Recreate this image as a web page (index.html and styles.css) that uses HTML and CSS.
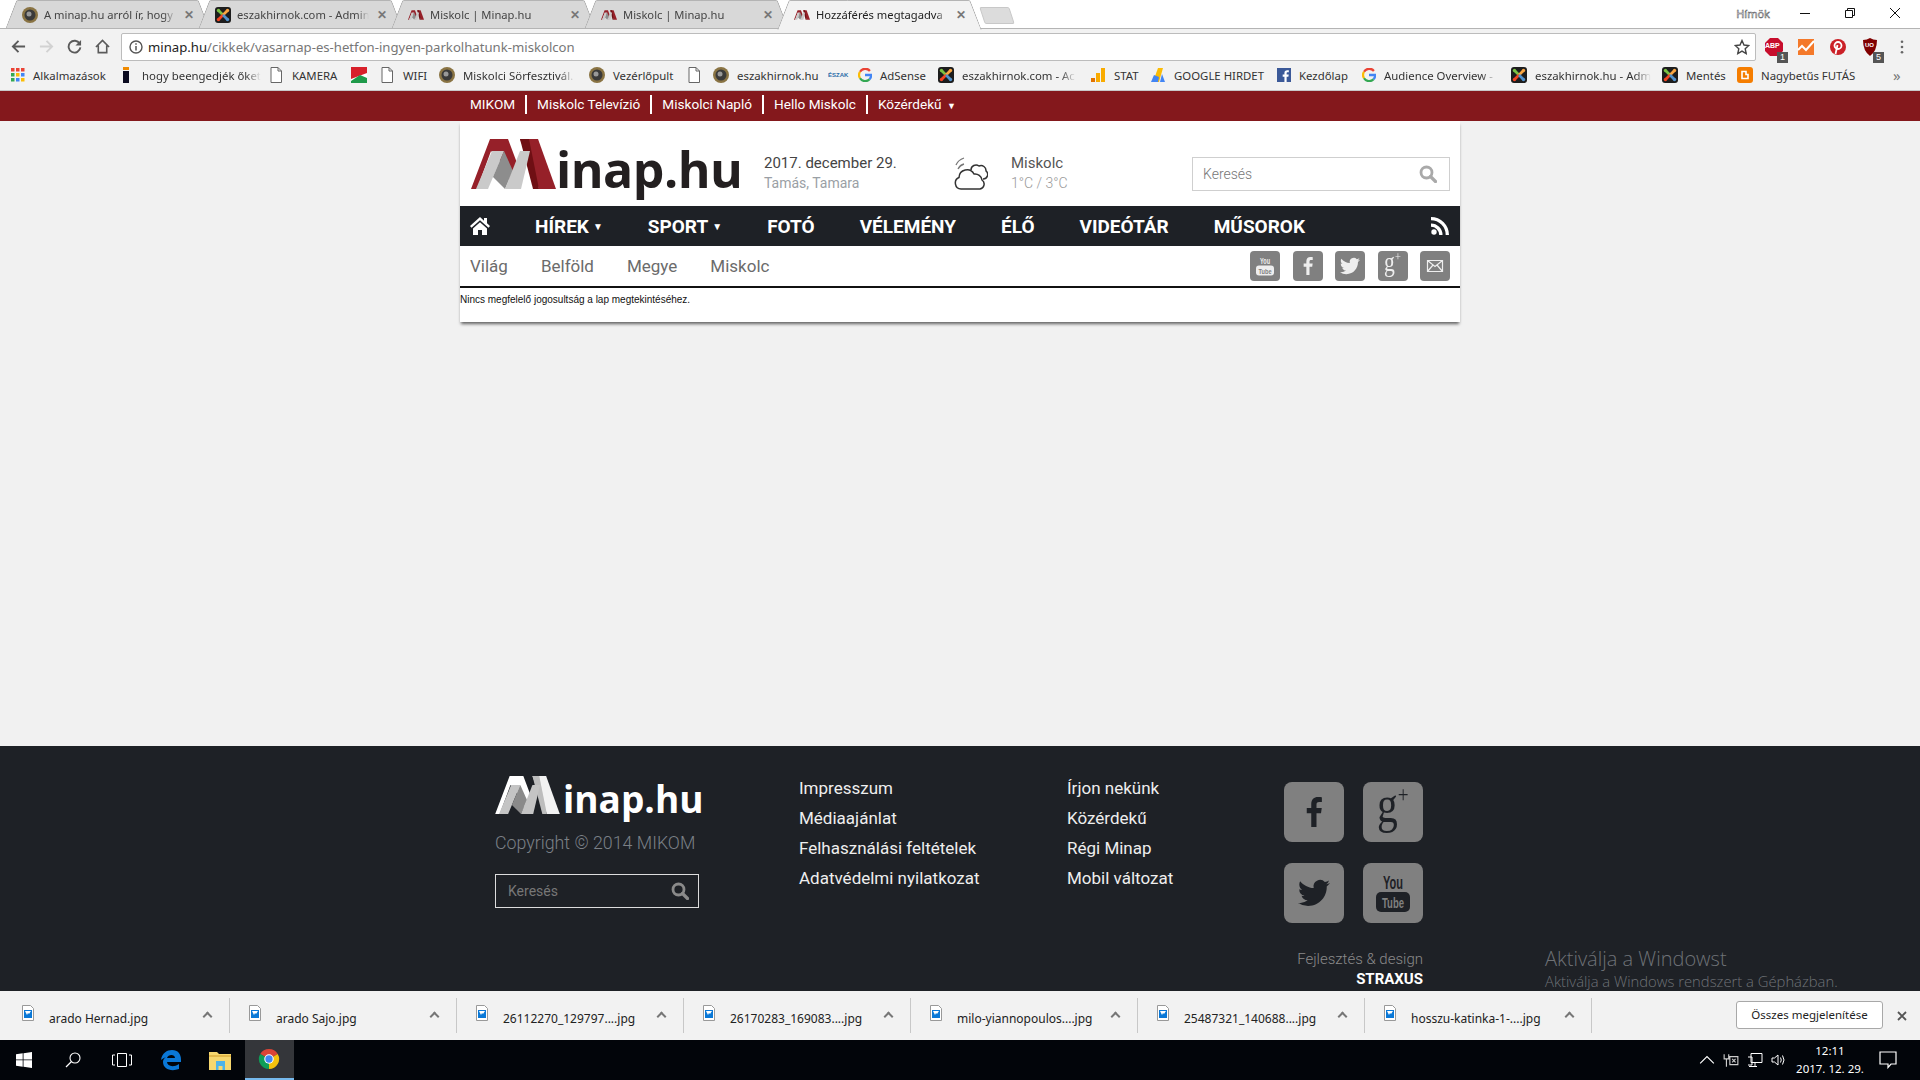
FILE: index.html
```html
<!DOCTYPE html>
<html lang="hu">
<head>
    <meta charset="UTF-8">
    <meta name="viewport" content="width=device-width, initial-scale=1.0">
    <title>Hozzáférés megtagadva</title>
    <link rel="stylesheet" href="styles.css">
</head>
<body>
    <svg class="defs" width="0" height="0" aria-hidden="true">
        <symbol id="i-mk" viewBox="0 0 16 16">
            <circle cx="8" cy="8" r="8" fill="#8a7444"/><circle cx="8" cy="8" r="5.500" fill="#3a3a3a"/><circle cx="7" cy="7" r="2.500" fill="#999"/>
        </symbol>
        <symbol id="i-joomla" viewBox="0 0 16 16">
            <rect width="16" height="16" rx="3" fill="#1d1d1d"/>
            <path d="M8 8L4 4" stroke="#7ac143" stroke-width="2.600"/><path d="M8 8l4-4" stroke="#f9a541" stroke-width="2.600"/>
            <path d="M8 8l-4 4" stroke="#f44321" stroke-width="2.600"/><path d="M8 8l4 4" stroke="#5091cd" stroke-width="2.600"/>
            <circle cx="3.500" cy="3.500" r="1.700" fill="#7ac143"/><circle cx="12.500" cy="3.500" r="1.700" fill="#f9a541"/><circle cx="3.500" cy="12.500" r="1.700" fill="#f44321"/><circle cx="12.500" cy="12.500" r="1.700" fill="#5091cd"/>
        </symbol>
        <symbol id="i-minap" viewBox="0 0 85 50">
            <polygon points="0,50 19,0 37,0 49,32 42,50 34,28 20,12 6,50" fill="#962029"/>
            <polygon points="49,0 67,0 85,50 68,50" fill="#962029"/>
            <polygon points="49,0 58,0 68,50 62,50" fill="#6f0f14"/>
            <polygon points="5,50 21,12 33,12 17,50" fill="#cacaca"/>
            <polygon points="33,12 42,32 34,50 22,38" fill="#8d8d8d"/>
            <polygon points="34,50 49,12 59,12 50,50" fill="#cacaca"/>
        </symbol>
        <symbol id="i-doc" viewBox="0 0 12 16">
            <path d="M1 .5h7l3.500 3.500v11.500h-10.500z" fill="#fff" stroke="#666"/><path d="M8 .5v3.500h3.500" fill="none" stroke="#666"/>
        </symbol>
        <symbol id="i-g" viewBox="0 0 16 16">
            <path d="M13.600 3.300A7 7 0 0 0 2.300 4.300" fill="none" stroke="#ea4335" stroke-width="2.600"/>
            <path d="M2.300 4.300a7 7 0 0 0 0 7.400" fill="none" stroke="#fbbc05" stroke-width="2.600"/>
            <path d="M2.300 11.700a7 7 0 0 0 10.900 1.200" fill="none" stroke="#34a853" stroke-width="2.600"/>
            <path d="M13.200 12.900A7 7 0 0 0 15 8H8" fill="none" stroke="#4285f4" stroke-width="2.600"/>
        </symbol>
        <symbol id="i-file" viewBox="0 0 12 16">
            <path d="M.5 .5h8l3 3v12h-11z" fill="#fff" stroke="#999"/><rect x="2" y="5" width="8" height="8" fill="#0a78d7"/><path d="M3 6h6l-2 3-1-1-1 2z" fill="#fff"/>
        </symbol>
        <symbol id="i-search" viewBox="0 0 18 18">
            <circle cx="7.500" cy="7.500" r="5.500" fill="none" stroke="currentColor" stroke-width="2.800"/><path d="M11.500 11.500l5 5" stroke="currentColor" stroke-width="3.200" stroke-linecap="round"/>
        </symbol>
        <symbol id="i-f" viewBox="0 0 24 24">
            <path d="M14 24V13h3.600l.6-4.300H14V6c0-1.200.4-2.100 2.100-2.100h2.200V.2C17.900.1 16.600 0 15.200 0 12 0 9.800 2 9.800 5.600v3.100H6.200V13h3.600v11z"/>
        </symbol>
        <symbol id="i-tw" viewBox="0 0 24 24">
            <path d="M23.953 4.570a10 10 0 01-2.825.775 4.958 4.958 0 002.163-2.723c-.951.555-2.005.959-3.127 1.184a4.920 4.920 0 00-8.384 4.482C7.690 8.095 4.067 6.130 1.640 3.162a4.822 4.822 0 00-.666 2.475c0 1.710.870 3.213 2.188 4.096a4.904 4.904 0 01-2.228-.616v.060a4.923 4.923 0 003.946 4.827 4.996 4.996 0 01-2.212.085 4.936 4.936 0 004.604 3.417 9.867 9.867 0 01-6.102 2.105c-.390 0-.779-.023-1.170-.067a13.995 13.995 0 007.557 2.209c9.053 0 13.998-7.496 13.998-13.985 0-.210 0-.420-.015-.630A9.935 9.935 0 0024 4.590z"/>
        </symbol>
    </svg>

    <div class="tabstrip">
        <div class="tab">
            <svg class="fav"><use href="#i-mk"/></svg>
            <span class="tab-title">A minap.hu arról ír, hogy</span>
            <span class="tab-x">✕</span>
        </div>
        <div class="tab">
            <svg class="fav"><use href="#i-joomla"/></svg>
            <span class="tab-title">eszakhirnok.com - Admin</span>
            <span class="tab-x">✕</span>
        </div>
        <div class="tab">
            <svg class="fav"><use href="#i-minap"/></svg>
            <span class="tab-title">Miskolc | Minap.hu</span>
            <span class="tab-x">✕</span>
        </div>
        <div class="tab">
            <svg class="fav"><use href="#i-minap"/></svg>
            <span class="tab-title">Miskolc | Minap.hu</span>
            <span class="tab-x">✕</span>
        </div>
        <div class="tab active">
            <svg class="fav"><use href="#i-minap"/></svg>
            <span class="tab-title">Hozzáférés megtagadva</span>
            <span class="tab-x">✕</span>
        </div>
        <div class="new-tab"></div>
        <div class="win-controls">
            <span class="win-user">Hímök</span>
            <svg class="win-btn" viewBox="0 0 12 12"><path d="M1 6.500h10" stroke="#111"/></svg>
            <svg class="win-btn" viewBox="0 0 12 12"><path d="M1.500 3.500h7v7h-7zM3.500 3.500v-2h7v7h-2" fill="none" stroke="#111"/></svg>
            <svg class="win-btn" viewBox="0 0 12 12"><path d="M1 1l10 10M11 1L1 11" stroke="#111"/></svg>
        </div>
    </div>

    <div class="toolbar">
        <svg class="tool" viewBox="0 0 16 16"><path d="M15 8H2M8 2L2 8l6 6" fill="none" stroke="#5a5a5a" stroke-width="2"/></svg>
        <svg class="tool" viewBox="0 0 16 16"><path d="M1 8h13M8 2l6 6-6 6" fill="none" stroke="#d2d2d2" stroke-width="2"/></svg>
        <svg class="tool" viewBox="0 0 16 16"><path d="M13.500 5A6.300 6.300 0 1 0 14.300 9" fill="none" stroke="#5a5a5a" stroke-width="2"/><path d="M15 1v6H9z" fill="#5a5a5a"/></svg>
        <svg class="tool" viewBox="0 0 16 16"><path d="M1 8.500L8 1.500l7 7M3.500 7v7.500h9V7" fill="none" stroke="#5a5a5a" stroke-width="1.700"/></svg>
        <div class="address">
            <svg class="addr-info" viewBox="0 0 14 14"><circle cx="7" cy="7" r="6" fill="none" stroke="#555" stroke-width="1.400"/><path d="M7 6v4.500M7 3.200v1.600" stroke="#555" stroke-width="1.500"/></svg>
            <span class="addr-url"><b>minap.hu</b>/cikkek/vasarnap-es-hetfon-ingyen-parkolhatunk-miskolcon</span>
            <svg class="addr-star" viewBox="0 0 16 16"><path d="M8 1.500l2 4.500 4.800.5-3.600 3.200 1 4.800L8 12.100 3.800 14.500l1-4.800L1.200 6.500 6 6z" fill="none" stroke="#444" stroke-width="1.400"/></svg>
        </div>
        <div class="extensions">
            <div class="ext">
                <svg viewBox="0 0 20 20"><polygon points="6,1 14,1 19,6 19,14 14,19 6,19 1,14 1,6" fill="#c70d2c"/></svg>
                <span class="ext-abp">ABP</span>
                <span class="ext-badge">1</span>
            </div>
            <div class="ext">
                <svg viewBox="0 0 20 20"><rect x="2" y="2" width="16" height="16" fill="#f4792a"/><path d="M2 13l4-4 4 4 8-9" fill="none" stroke="#fff" stroke-width="2"/></svg>
            </div>
            <div class="ext">
                <svg viewBox="0 0 20 20"><circle cx="10" cy="10" r="8" fill="#cb2027"/><circle cx="10" cy="8.500" r="3.500" fill="none" stroke="#fff" stroke-width="1.800"/><path d="M9.500 8l-2 9" stroke="#fff" stroke-width="1.800"/></svg>
            </div>
            <div class="ext">
                <svg viewBox="0 0 20 20"><path d="M3 3q4 0 7-2 3 2 7 2 0 11-7 16-7-5-7-16z" fill="#800000"/></svg>
                <span class="ext-uo">UO</span>
                <span class="ext-badge">5</span>
            </div>
            <svg class="menu-dots" viewBox="0 0 4 16"><circle cx="2" cy="2" r="1.500" fill="#666"/><circle cx="2" cy="8" r="1.500" fill="#666"/><circle cx="2" cy="14" r="1.500" fill="#666"/></svg>
        </div>
    </div>

    <div class="bookmarks">
        <div class="bm">
            <svg class="fav small" viewBox="0 0 14 14"><path d="M0 0h3.500v3.500H0z" fill="#ea4335"/><path d="M5 0h3.500v3.500H5z" fill="#ea4335"/><path d="M10 0h3.500v3.500H10z" fill="#ea4335"/><path d="M0 5h3.500v3.500H0z" fill="#34a853"/><path d="M5 5h3.500v3.500H5z" fill="#fbbc05"/><path d="M10 5h3.500v3.500H10z" fill="#4285f4"/><path d="M0 10h3.500v3.500H0z" fill="#34a853"/><path d="M5 10h3.500v3.500H5z" fill="#4285f4"/><path d="M10 10h3.500v3.500H10z" fill="#fbbc05"/></svg>
            Alkalmazások
        </div>
        <div class="bm">
            <svg class="fav narrow" viewBox="3 0 12 16"><rect x="4" y="0" width="6" height="3" fill="#f08a00"/><rect x="4" y="4" width="6" height="12" fill="#0b0b20"/></svg>
            <span class="bm-fade">hogy beengedjék őket</span>
        </div>
        <div class="bm"><svg class="fav doc"><use href="#i-doc"/></svg>KAMERA</div>
        <div class="bm">
            <svg class="fav" viewBox="0 0 16 16"><rect width="16" height="16" fill="#fff"/><path d="M0 0h16v6L0 12z" fill="#d8202a"/><path d="M0 14l9-6 7 3v5H0z" fill="#1f9a4a"/></svg>
        </div>
        <div class="bm"><svg class="fav doc"><use href="#i-doc"/></svg>WIFI</div>
        <div class="bm"><svg class="fav"><use href="#i-mk"/></svg><span class="bm-fade">Miskolci Sörfesztivál.</span></div>
        <div class="bm"><svg class="fav"><use href="#i-mk"/></svg>Vezérlőpult</div>
        <div class="bm"><svg class="fav doc"><use href="#i-doc"/></svg></div>
        <div class="bm"><svg class="fav"><use href="#i-mk"/></svg>eszakhirnok.hu</div>
        <div class="bm"><span class="bm-eszak">ÉSZAK</span></div>
        <div class="bm"><svg class="fav small"><use href="#i-g"/></svg>AdSense</div>
        <div class="bm"><svg class="fav"><use href="#i-joomla"/></svg><span class="bm-fade">eszakhirnok.com - Ac</span></div>
        <div class="bm">
            <svg class="fav" viewBox="0 0 16 16"><rect x="11" y="1" width="4" height="14" fill="#f9ab00"/><rect x="6" y="6" width="4" height="9" fill="#f9ab00"/><rect x="1" y="11" width="4" height="4" fill="#e37400"/></svg>
            STAT
        </div>
        <div class="bm">
            <svg class="fav" viewBox="0 0 16 16"><path d="M8 1h5l-4 14H3z" fill="#fbbc05"/><path d="M1 15l3-7 5 2-1 5z" fill="#4285f4"/><path d="M12 7l3 8h-5z" fill="#4285f4"/></svg>
            GOOGLE HIRDET
        </div>
        <div class="bm">
            <svg class="fav small" viewBox="0 0 16 16"><rect width="16" height="16" fill="#3b5998"/><path d="M11 16v-6h2l.4-2.500H11V6c0-.8.3-1.200 1.300-1.200h1.200V2.600c-.6-.1-1.200-.1-1.800-.1-2 0-3.200 1.200-3.200 3.200v1.800H6.500V10h2v6z" fill="#fff"/></svg>
            Kezdőlap
        </div>
        <div class="bm"><svg class="fav small"><use href="#i-g"/></svg><span class="bm-fade">Audience Overview -</span></div>
        <div class="bm"><svg class="fav"><use href="#i-joomla"/></svg><span class="bm-fade">eszakhirnok.hu - Adm</span></div>
        <div class="bm"><svg class="fav"><use href="#i-joomla"/></svg>Mentés</div>
        <div class="bm">
            <svg class="fav" viewBox="0 0 16 16"><rect width="16" height="16" rx="3" fill="#f57d00"/><path d="M5 4.500h4v3h2v4H5z" fill="none" stroke="#fff" stroke-width="1.600"/></svg>
            Nagybetűs FUTÁS
        </div>
        <span class="bm-more">»</span>
    </div>

    <div class="topbar">
        <div class="topbar-inner">
            <a href="#">MIKOM</a>
            <a href="#">Miskolc Televízió</a>
            <a href="#">Miskolci Napló</a>
            <a href="#">Hello Miskolc</a>
            <a href="#">Közérdekű <span class="caret-down">▼</span></a>
        </div>
    </div>

    <div class="page">
        <div class="site">
            <div class="head">
                <div class="logo">
                    <svg class="logo-m"><use href="#i-minap"/></svg>
                    <span class="logo-text">inap.hu</span>
                </div>
                <div class="date">
                    <div class="date-main">2017. december 29.</div>
                    <div class="date-sub">Tamás, Tamara</div>
                </div>
                <svg class="weather-icon" viewBox="0 0 34 33">
                    <path d="M7 32a6 6 0 0 1-2-11.500 8 8 0 0 1 15-3.500 7 7 0 0 1 8 6 5 5 0 0 1-2 9z" fill="#fff" stroke="#333" stroke-width="1.500"/>
                    <path d="M17 13a5 5 0 0 1 8-4 5 5 0 0 1 7 5 4.500 4.500 0 0 1-3 8" fill="none" stroke="#333" stroke-width="1.500"/>
                    <path d="M2 8q2-5 8-7M4 12q2-4 6-5" fill="none" stroke="#777" stroke-width="1.300"/>
                </svg>
                <div class="weather">
                    <div class="weather-city">Miskolc</div>
                    <div class="weather-temp">1°C / 3°C</div>
                </div>
                <div class="head-search">
                    <span class="placeholder">Keresés</span>
                    <svg class="search-icon"><use href="#i-search"/></svg>
                </div>
            </div>
            <nav class="mainnav">
                <svg class="home-icon" viewBox="0 0 20 18"><path d="M10 0L0 9l1.500 1.700L10 3.200l8.500 7.500L20 9l-3-2.700V1h-3v2.700z" fill="#fff"/><path d="M3 11.500L10 5.300l7 6.200V18h-5v-5H8v5H3z" fill="#fff"/></svg>
                <a href="#">HÍREK<span class="nav-caret">▼</span></a>
                <a href="#">SPORT<span class="nav-caret">▼</span></a>
                <a href="#">FOTÓ</a>
                <a href="#">VÉLEMÉNY</a>
                <a href="#">ÉLŐ</a>
                <a href="#">VIDEÓTÁR</a>
                <a href="#">MŰSOROK</a>
                <svg class="rss-icon" viewBox="0 0 18 18"><circle cx="3" cy="15" r="2.700" fill="#fff"/><path d="M0 6.500a11.500 11.500 0 0 1 11.500 11.500h-3.300A8.200 8.200 0 0 0 0 9.800z" fill="#fff"/><path d="M0 0a18 18 0 0 1 18 18h-3.300A14.700 14.700 0 0 0 0 3.300z" fill="#fff"/></svg>
            </nav>
            <div class="subnav">
                <a href="#">Világ</a>
                <a href="#">Belföld</a>
                <a href="#">Megye</a>
                <a href="#">Miskolc</a>
                <div class="soc-small">
                    <div class="soc">
                        <svg viewBox="0 0 30 30">
                            <text x="15" y="13" text-anchor="middle" textLength="10" lengthAdjust="spacingAndGlyphs" class="yt-you">You</text>
                            <rect x="6" y="14.500" width="18" height="10" rx="3" fill="#eee"/>
                            <text x="15" y="22.500" text-anchor="middle" textLength="13" lengthAdjust="spacingAndGlyphs" class="yt-tube">Tube</text>
                        </svg>
                    </div>
                    <div class="soc"><svg class="soc-f"><use href="#i-f"/></svg></div>
                    <div class="soc"><svg class="soc-tw"><use href="#i-tw"/></svg></div>
                    <div class="soc"><span class="gplus">g<sup>+</sup></span></div>
                    <div class="soc">
                        <svg viewBox="0 0 30 30"><path d="M7.500 9.500h15v11h-15zM7.500 9.500l7.500 6 7.500-6M7.500 20.500l5.500-6.500M22.500 20.500l-5.500-6.500" fill="none" stroke="#eee" stroke-width="1.200"/></svg>
                    </div>
                </div>
            </div>
            <p class="notice">Nincs megfelelő jogosultság a lap megtekintéséhez.</p>
        </div>
    </div>

    <footer class="footer">
        <div class="footer-inner">
            <div class="foot-brand">
                <div class="foot-logo">
                    <svg class="foot-m" viewBox="0 0 85 50">
                        <polygon points="0,50 19,0 37,0 49,32 42,50 34,28 20,12 6,50" fill="#fff"/>
                        <polygon points="49,0 67,0 85,50 68,50" fill="#f2f2f2"/>
                        <polygon points="49,0 58,0 68,50 62,50" fill="#bdbdbd"/>
                        <polygon points="5,50 21,12 33,12 17,50" fill="#c4c4c4"/>
                        <polygon points="33,12 42,32 34,50 22,38" fill="#8a8a8a"/>
                        <polygon points="34,50 49,12 59,12 50,50" fill="#c4c4c4"/>
                    </svg>
                    <span class="foot-text">inap.hu</span>
                </div>
                <div class="copyright">Copyright © 2014 MIKOM</div>
                <div class="foot-search">
                    <span class="placeholder">Keresés</span>
                    <svg class="search-icon"><use href="#i-search"/></svg>
                </div>
            </div>
            <div class="foot-links">
                <a href="#">Impresszum</a>
                <a href="#">Médiaajánlat</a>
                <a href="#">Felhasználási feltételek</a>
                <a href="#">Adatvédelmi nyilatkozat</a>
            </div>
            <div class="foot-links">
                <a href="#">Írjon nekünk</a>
                <a href="#">Közérdekű</a>
                <a href="#">Régi Minap</a>
                <a href="#">Mobil változat</a>
            </div>
            <div class="foot-right">
                <div class="soc-big">
                    <div class="big"><svg class="big-f"><use href="#i-f"/></svg></div>
                    <div class="big"><span class="big-gplus">g<sup>+</sup></span></div>
                    <div class="big"><svg class="big-tw"><use href="#i-tw"/></svg></div>
                    <div class="big">
                        <svg viewBox="0 0 60 60">
                            <text x="30" y="26" text-anchor="middle" textLength="20" lengthAdjust="spacingAndGlyphs" class="byt-you">You</text>
                            <rect x="13" y="29" width="34" height="20" rx="5" fill="#1e2126"/>
                            <text x="30" y="45" text-anchor="middle" textLength="22" lengthAdjust="spacingAndGlyphs" class="byt-tube">Tube</text>
                        </svg>
                    </div>
                </div>
                <div class="credit">
                    <div>Fejlesztés &amp; design</div>
                    <div class="credit-name">STRAXUS</div>
                </div>
            </div>
        </div>
        <div class="activate">
            <div class="activate-title">Aktiválja a Windowst</div>
            <div class="activate-sub">Aktiválja a Windows rendszert a Gépházban.</div>
        </div>
    </footer>

    <div class="downloads">
        <div class="dl"><svg class="dl-icon"><use href="#i-file"/></svg><span class="dl-name">arado Hernad.jpg</span><span class="dl-caret"></span></div>
        <div class="dl"><svg class="dl-icon"><use href="#i-file"/></svg><span class="dl-name">arado Sajo.jpg</span><span class="dl-caret"></span></div>
        <div class="dl"><svg class="dl-icon"><use href="#i-file"/></svg><span class="dl-name">26112270_129797....jpg</span><span class="dl-caret"></span></div>
        <div class="dl"><svg class="dl-icon"><use href="#i-file"/></svg><span class="dl-name">26170283_169083....jpg</span><span class="dl-caret"></span></div>
        <div class="dl"><svg class="dl-icon"><use href="#i-file"/></svg><span class="dl-name">milo-yiannopoulos....jpg</span><span class="dl-caret"></span></div>
        <div class="dl"><svg class="dl-icon"><use href="#i-file"/></svg><span class="dl-name">25487321_140688....jpg</span><span class="dl-caret"></span></div>
        <div class="dl"><svg class="dl-icon"><use href="#i-file"/></svg><span class="dl-name">hosszu-katinka-1-....jpg</span><span class="dl-caret"></span></div>
        <button class="dl-all">Összes megjelenítése</button>
        <svg class="dl-close" viewBox="0 0 10 10"><path d="M1 1l8 8M9 1l-8 8" stroke="#555" stroke-width="1.800"/></svg>
    </div>

    <div class="taskbar">
        <div class="task">
            <svg class="task-icon" viewBox="0 0 16 16"><path d="M0 2.200L6.700 1.300v6.200H0zM7.500 1.200L16 0v7.500H7.500zM0 8.300h6.700v6.400L0 13.800zM7.500 8.300H16V16l-8.500-1.200z" fill="#fff"/></svg>
        </div>
        <div class="task">
            <svg class="task-icon" viewBox="0 0 16 16"><circle cx="10" cy="6" r="5" fill="none" stroke="#fff" stroke-width="1.100"/><path d="M6.500 9.500L1 15" stroke="#fff" stroke-width="1.300"/></svg>
        </div>
        <div class="task">
            <svg class="task-view" viewBox="0 0 20 14"><path d="M5.500 .5h9v13h-9zM3 2H.5v10H3M17 2h2.500v10H17" fill="none" stroke="#fff"/></svg>
        </div>
        <div class="task">
            <svg class="task-edge" viewBox="0 0 22 22"><path d="M1 11C2 4 7 1 12 1c6 0 9 4 9 10v2H7c.3 4 6 6 12 2v5c-8 3-16 0-16-7 0-2 1-4 3-5-2 1-4 2-5 3zM7 9h8c0-4-7-4-8 0z" fill="#0a78d7"/></svg>
        </div>
        <div class="task">
            <svg class="task-edge" viewBox="0 0 22 20"><path d="M0 2h8l2 2h12v16H0z" fill="#f6d76e"/><path d="M0 5h22v2H0z" fill="#e3b94a"/><path d="M7 11h9v9h-2.500v-4h-4v4H7z" fill="#4eb3e8"/></svg>
        </div>
        <div class="task task-active">
            <svg class="task-edge" viewBox="0 0 24 24">
                <path d="M12 12L2.470 6.500A11 11 0 0 1 21.530 6.500Z" fill="#db4437"/>
                <path d="M12 12L21.530 6.500A11 11 0 0 1 12 23Z" fill="#f4c20d"/>
                <path d="M12 12L12 23A11 11 0 0 1 2.470 6.500Z" fill="#0f9d58"/>
                <circle cx="12" cy="12" r="5.200" fill="#fff"/><circle cx="12" cy="12" r="4" fill="#4285f4"/>
            </svg>
        </div>
        <div class="tray">
            <svg class="tray-ico" viewBox="0 0 14 14"><path d="M1 10l6-6 6 6" fill="none" stroke="#fff"/></svg>
            <svg class="tray-ico" viewBox="0 0 14 14"><path d="M1 2v4h4V2M3 6v7M6 4h7v7H6z" fill="none" stroke="#ccc"/><path d="M8 6l3 3M11 6l-3 3" stroke="#ccc"/></svg>
            <svg class="tray-ico" viewBox="0 0 16 16"><path d="M4 1.500h11v9H4zM1 5h4v8H1M2 14.500h8M8 11v3" fill="none" stroke="#fff"/></svg>
            <svg class="tray-ico" viewBox="0 0 16 16"><path d="M1 6h2.500L7 3v10L3.500 10H1zM9.500 5.500q1.500 2.500 0 5M11.500 3.500q3 4.500 0 9" fill="none" stroke="#fff"/></svg>
            <div class="clock">
                <div>12:11</div>
                <div>2017. 12. 29.</div>
            </div>
            <svg class="tray-note" viewBox="0 0 18 18"><path d="M1 1h16v12h-5l-3 3.500V13H1z" fill="none" stroke="#fff" stroke-width="1.200"/></svg>
        </div>
    </div>
</body>
</html>
```

FILE: styles.css
```css
* {
    box-sizing: border-box;
}

html, body {
    height: 100%;
}

body {
    margin: 0;
    display: flex;
    flex-direction: column;
    height: 1080px;
    overflow: hidden;
    font-family: 'Roboto', sans-serif;
    background: #f1f1f1;
}

a {
    color: inherit;
    text-decoration: none;
}

.defs {
    position: absolute;
}

/* browser window */
.tabstrip {
    display: flex;
    align-items: flex-start;
    flex: none;
    height: 29px;
    padding-left: 6px;
    background: #fff;
    border-bottom: 1px solid #b4b4b4;
    font-family: 'Noto Sans', sans-serif;
    font-size: 11.200px;
    color: #444;
}

.tab {
    position: relative;
    display: flex;
    align-items: center;
    flex: none;
    width: 203px;
    height: 29px;
    margin-right: -10px;
    padding: 0 13px 0 16px;
}

.tab::before,
.tab::after {
    content: '';
    position: absolute;
    top: 0;
    bottom: 1px;
    width: 60%;
    background: #d8d8d8;
    border-top: 1px solid #b4b4b4;
    z-index: 0;
}

.tab::before {
    left: 5px;
    border-left: 1px solid #a6a6a6;
    border-radius: 2px 0 0 0;
    transform: skewX(-21deg);
}

.tab::after {
    right: 5px;
    border-right: 1px solid #a6a6a6;
    border-radius: 0 2px 0 0;
    transform: skewX(21deg);
}

.tab.active {
    z-index: 2;
    color: #222;
}

.tab.active::before,
.tab.active::after {
    bottom: -1px;
    background: #f2f2f2;
}

.fav {
    flex: none;
    width: 16px;
    height: 16px;
    position: relative;
    z-index: 1;
}

.fav.doc {
    width: 12px;
    margin-right: 2px;
}

.fav.narrow {
    width: 12px;
}

.fav.small {
    width: 14px;
    height: 14px;
}

.tab-title {
    position: relative;
    z-index: 1;
    flex: 1;
    min-width: 0;
    margin-left: 6px;
    white-space: nowrap;
    overflow: hidden;
    -webkit-mask-image: linear-gradient(to left, transparent 0, #000 12px);
    mask-image: linear-gradient(to left, transparent 0, #000 12px);
}

.tab-x {
    position: relative;
    z-index: 1;
    flex: none;
    width: 14px;
    margin-left: 6px;
    font-size: 12px;
    font-weight: bold;
    color: #777;
    text-align: center;
}

.new-tab {
    flex: none;
    width: 30px;
    height: 17px;
    margin: 7px 0 0 11px;
    background: #dcdcdc;
    border: 1px solid #c8c8c8;
    transform: skewX(18deg);
    border-radius: 2px;
}

.win-controls {
    display: flex;
    align-items: center;
    margin-left: auto;
    height: 26px;
    padding-right: 19px;
    gap: 33px;
}

.win-user {
    margin-right: -4px;
    font-size: 11px;
    color: #fff;
    -webkit-text-stroke: .5px #555;
}

.win-btn {
    width: 12px;
    height: 12px;
}

.toolbar {
    display: flex;
    align-items: center;
    flex: none;
    height: 32px;
    padding: 3px 0 0 11px;
    background: #f2f2f2;
}

.tool {
    flex: none;
    width: 15px;
    height: 15px;
    margin-right: 13px;
}

.address {
    display: flex;
    align-items: center;
    flex: none;
    width: 1635px;
    height: 28px;
    margin-left: -2px;
    padding: 0 5px 0 7px;
    background: #fff;
    border: 1px solid #bcbcbc;
    border-radius: 2px;
}

.addr-info {
    width: 14px;
    height: 14px;
    flex: none;
}

.addr-url {
    margin-left: 5px;
    font-family: 'Noto Sans', sans-serif;
    font-size: 13.150px;
    color: #777;
}

.addr-url b {
    font-weight: normal;
    color: #222;
}

.addr-star {
    width: 16px;
    height: 16px;
    margin-left: auto;
}

.extensions {
    display: flex;
    align-items: center;
    gap: 12px;
    margin-left: 8px;
}

.ext {
    position: relative;
    width: 20px;
    height: 20px;
}

.ext svg {
    display: block;
    width: 20px;
    height: 20px;
}

.ext-abp {
    position: absolute;
    left: 1px;
    top: 5px;
    font: bold 7px 'Liberation Sans', sans-serif;
    color: #fff;
}

.ext-uo {
    position: absolute;
    left: 5px;
    top: 5px;
    font: bold 6px 'Liberation Sans', sans-serif;
    color: #fff;
}

.ext-badge {
    position: absolute;
    right: -4px;
    bottom: -6px;
    width: 11px;
    height: 11px;
    background: #555;
    color: #fff;
    font: 9px/11px 'Liberation Sans', sans-serif;
    text-align: center;
}

.menu-dots {
    width: 4px;
    height: 14px;
    margin-left: 8px;
}

.bookmarks {
    display: grid;
    grid-template-columns: 111px 148px 81px 30px 58px 150px 99px 25px 115px 30px 80px 152px 60px 127px 85px 149px 151px 75px 156px auto;
    align-items: center;
    flex: none;
    height: 30px;
    padding: 0 0 1px 11px;
    background: #f2f2f2;
    border-bottom: 1px solid #c8c8c8;
    font-family: 'Noto Sans', sans-serif;
    font-size: 11.400px;
    color: #333;
}

.bm {
    display: flex;
    align-items: center;
    gap: 8px;
    white-space: nowrap;
    overflow: hidden;
}

.bm-fade {
    width: 100%;
    margin-right: 14px;
    -webkit-mask-image: linear-gradient(to left, transparent 0, #000 16px);
    mask-image: linear-gradient(to left, transparent 0, #000 16px);
}

.bm-eszak {
    font: bold 6px 'Liberation Sans', sans-serif;
    color: #2a6ca8;
}

.bm-more {
    font-size: 15px;
    color: #777;
}

/* site */
.topbar {
    height: 30px;
    flex: none;
    background: #84181c;
}

.topbar-inner {
    display: flex;
    align-items: center;
    width: 1000px;
    height: 100%;
    margin: 0 auto;
    padding: 0 0 4px 10px;
    color: #fff;
    font-size: 13.600px;
}

.topbar-inner a {
    padding-right: 10px;
    margin-right: 10px;
    border-right: 2px solid #fff;
    line-height: 19px;
}

.topbar-inner a:last-child {
    border: 0;
}

.caret-down {
    margin-left: 2px;
    font-size: 9px;
    line-height: 0;
}

.page {
    flex: 1;
    background: #f1f1f1;
}

.site {
    width: 1000px;
    margin: 0 auto;
    background: #fff;
    box-shadow: 0 3px 3px -1px rgba(0, 0, 0, 0.6);
}

.head {
    display: flex;
    align-items: center;
    height: 85px;
    padding: 0 10px 0 11px;
}

.logo {
    display: flex;
    align-items: flex-end;
    flex: none;
    width: 293px;
    height: 50px;
}

.logo-m {
    flex: none;
    width: 85px;
    height: 50px;
}

.logo-text {
    font-family: 'Open Sans', sans-serif;
    font-weight: 700;
    font-size: 50px;
    line-height: 50px;
    letter-spacing: -.5px;
    color: #231f20;
    margin-bottom: -5px;
}

.date {
    flex: none;
    width: 190px;
    margin-top: 19px;
    font-size: 15px;
    line-height: 20px;
    color: #444;
}

.date-sub {
    font-size: 14px;
    color: #9a9fa5;
}

.weather-icon {
    flex: none;
    width: 34px;
    height: 33px;
    margin-top: 20px;
    margin-right: 23px;
}

.weather {
    flex: none;
    width: 181px;
    margin-top: 19px;
    font-size: 15px;
    line-height: 20px;
    color: #555;
}

.weather-temp {
    font-size: 14px;
    font-weight: 300;
    color: #999;
}

.head-search {
    display: flex;
    align-items: center;
    justify-content: space-between;
    flex: none;
    width: 258px;
    height: 34px;
    margin-top: 21px;
    padding: 0 12px 0 10px;
    border: 1px solid #cfcfcf;
}

.placeholder {
    font-size: 14px;
    font-weight: 300;
    color: #777;
}

.search-icon {
    width: 18px;
    height: 18px;
    color: #a9a9a9;
}

.mainnav {
    display: flex;
    align-items: center;
    gap: 45px;
    height: 40px;
    padding: 0 11px 0 10px;
    background: #1e2126;
    color: #fff;
    font-size: 19px;
    font-weight: 700;
}

.home-icon {
    flex: none;
    width: 20px;
    height: 18px;
}

.nav-caret {
    margin-left: 4px;
    font-size: 10px;
    vertical-align: 3px;
}

.rss-icon {
    flex: none;
    width: 18px;
    height: 18px;
    margin-left: auto;
}

.subnav {
    display: flex;
    align-items: center;
    gap: 33px;
    height: 42px;
    padding: 0 10px;
    border-bottom: 2px solid #111;
    color: #6b6b6b;
    font-size: 17px;
}

.soc-small {
    display: flex;
    gap: 12.500px;
    margin-left: auto;
}

.soc {
    display: flex;
    align-items: center;
    justify-content: center;
    width: 30px;
    height: 30px;
    background: #808080;
    border-radius: 4px;
    fill: #eee;
    color: #eee;
}

.soc > svg {
    width: 30px;
    height: 30px;
}

.soc > svg.soc-f {
    width: 18px;
    height: 18px;
}

.soc > svg.soc-tw {
    width: 20px;
    height: 20px;
}

.yt-you {
    font: bold 9px 'Liberation Sans', sans-serif;
    fill: #eee;
}

.yt-tube {
    font: bold 8px 'Liberation Sans', sans-serif;
    fill: #808080;
}

.gplus {
    font: 27px/27px 'Liberation Serif', serif;
    margin-top: -8px;
    transform: scaleX(.8);
}

.gplus sup {
    font-size: 13px;
    vertical-align: 10px;
    line-height: 0;
}

.notice {
    height: 34px;
    margin: 0;
    padding-top: 6px;
    font-family: 'Liberation Sans', sans-serif;
    font-size: 10px;
    line-height: 12px;
    color: #111;
}

/* footer */
.footer {
    position: relative;
    flex: none;
    height: 245px;
    background: #1e2126;
}

.footer-inner {
    display: grid;
    grid-template-columns: 304px 268px 217px 139px;
    width: 1000px;
    margin: 0 auto;
    padding: 30px 0 0 35px;
}

.foot-logo {
    display: flex;
    align-items: flex-end;
    height: 38px;
}

.foot-m {
    flex: none;
    width: 65px;
    height: 38px;
}

.foot-text {
    margin-left: 3px;
    font-family: 'Open Sans', sans-serif;
    font-weight: 700;
    font-size: 37px;
    line-height: 38px;
    color: #fff;
    margin-bottom: -4px;
}

.copyright {
    margin-top: 19px;
    font-size: 17.800px;
    font-weight: 300;
    line-height: 20px;
    color: #7b8086;
    white-space: nowrap;
}

.foot-search {
    display: flex;
    align-items: center;
    justify-content: space-between;
    width: 204px;
    height: 34px;
    margin-top: 21px;
    padding: 0 9px 0 12px;
    border: 1px solid #ddd;
}

.foot-search .placeholder {
    color: #777;
    font-weight: 400;
}

.foot-search .search-icon {
    color: #8a8a8a;
}

.foot-links {
    display: flex;
    flex-direction: column;
    margin-top: -3px;
    color: #eee;
    font-size: 17px;
    line-height: 30px;
}

.soc-big {
    display: grid;
    grid-template-columns: 60px 60px;
    gap: 21px 19px;
    margin-top: 6px;
}

.big {
    display: flex;
    align-items: center;
    justify-content: center;
    width: 60px;
    height: 60px;
    background: #808080;
    border-radius: 8px;
    fill: #1e2126;
    color: #1e2126;
}

.big > svg {
    width: 60px;
    height: 60px;
}

.big > svg.big-f {
    width: 30px;
    height: 30px;
}

.big > svg.big-tw {
    width: 32px;
    height: 32px;
}

.big-gplus {
    font: 52px/52px 'Liberation Serif', serif;
    margin-top: -14px;
    transform: scaleX(.8);
}

.big-gplus sup {
    font-size: 24px;
    vertical-align: 20px;
    line-height: 0;
}

.byt-you {
    font: bold 18px 'Liberation Sans', sans-serif;
    fill: #1e2126;
}

.byt-tube {
    font: bold 15px 'Liberation Sans', sans-serif;
    fill: #808080;
}

.credit {
    margin-top: 26px;
    text-align: right;
    font-size: 15px;
    font-weight: 300;
    line-height: 20px;
    color: #8a8a8a;
    white-space: nowrap;
}

.credit-name {
    font-weight: 700;
    color: #fff;
    font-size: 15px;
}

.activate {
    position: absolute;
    left: 1545px;
    top: 199px;
    font-family: 'Open Sans', sans-serif;
    font-weight: 300;
    color: #6e7277;
    white-space: nowrap;
}

.activate-title {
    font-size: 20px;
    line-height: 27px;
}

.activate-sub {
    font-size: 14.800px;
    line-height: 18px;
}

/* downloads */
.downloads {
    display: flex;
    align-items: center;
    flex: none;
    height: 49px;
    padding-left: 3px;
    background: #f2f2f2;
    font-family: 'Noto Sans', sans-serif;
    font-size: 12px;
    color: #222;
}

.dl {
    display: flex;
    align-items: center;
    flex: none;
    width: 227px;
    height: 35px;
    padding: 0 18px 0 19px;
    border-right: 1px solid #c8c8c8;
}

.dl-icon {
    flex: none;
    width: 12px;
    height: 16px;
    margin-top: -6px;
}

.dl-name {
    margin: 5px 0 0 15px;
}

.dl-caret {
    width: 7px;
    height: 7px;
    margin: 2px 0 0 auto;
    border-left: 2px solid #777;
    border-top: 2px solid #777;
    transform: rotate(45deg);
}

.dl-all {
    flex: none;
    width: 147px;
    height: 28px;
    margin: -2px 0 0 144px;
    background: #fff;
    border: 1px solid #a8a8a8;
    border-radius: 3px;
    font-family: 'Noto Sans', sans-serif;
    font-size: 11.500px;
    color: #222;
}

.dl-close {
    width: 10px;
    height: 10px;
    margin-left: 14px;
}

/* taskbar */
.taskbar {
    display: flex;
    flex: none;
    height: 40px;
    background: #02050a;
    color: #fff;
}

.task {
    display: flex;
    align-items: center;
    justify-content: center;
    flex: none;
    width: 49px;
    padding-right: 2px;
}

.task-active {
    background: #34363a;
    border-bottom: 2px solid #76b9ed;
}

.task-icon {
    width: 16px;
    height: 16px;
}

.task-view {
    width: 20px;
    height: 14px;
}

.task-edge {
    width: 22px;
    height: 22px;
}

.tray {
    display: flex;
    align-items: center;
    gap: 8px;
    margin-left: auto;
    padding-right: 23px;
}

.tray-ico {
    width: 16px;
    height: 16px;
}

.clock {
    width: 70px;
    margin-right: 6px;
    font-family: 'Noto Sans', sans-serif;
    font-size: 11.500px;
    line-height: 18px;
    text-align: center;
}

.tray-note {
    width: 18px;
    height: 18px;
}
```
